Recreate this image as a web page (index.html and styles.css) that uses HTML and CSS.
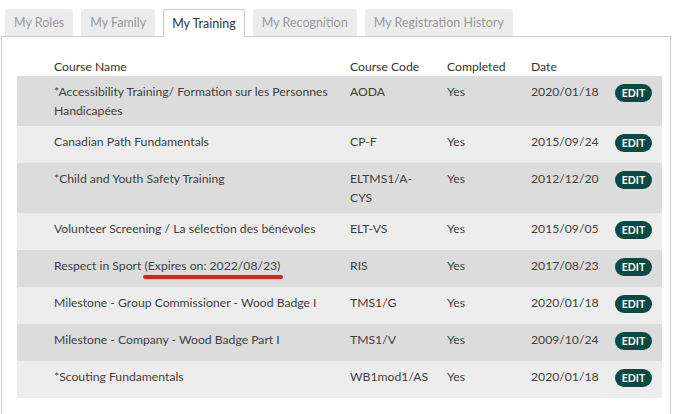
FILE: index.html
```html
<!DOCTYPE html>
<html>
<head>
<meta charset="utf-8">
<link rel="stylesheet" href="styles.css">
</head>
<body>
<div class="page">
  <nav class="tabs">
    <span class="tab">My Roles</span>
    <span class="tab">My Family</span>
    <span class="tab active">My Training</span>
    <span class="tab">My Recognition</span>
    <span class="tab">My Registration History</span>
  </nav>
  <section class="panel">
    <div class="table">
      <div class="row head">
        <div class="c name">Course Name</div>
        <div class="c code">Course Code</div>
        <div class="c done">Completed</div>
        <div class="c date">Date</div>
        <div class="c act"></div>
      </div>
      <div class="row dark">
        <div class="c name">*Accessibility Training/ Formation sur les Personnes Handicapées</div>
        <div class="c code">AODA</div>
        <div class="c done">Yes</div>
        <div class="c date">2020/01/18</div>
        <div class="c act"><span class="edit">EDIT</span></div>
      </div>
      <div class="row light">
        <div class="c name">Canadian Path Fundamentals</div>
        <div class="c code">CP-F</div>
        <div class="c done">Yes</div>
        <div class="c date">2015/09/24</div>
        <div class="c act"><span class="edit">EDIT</span></div>
      </div>
      <div class="row dark">
        <div class="c name">*Child and Youth Safety Training</div>
        <div class="c code">ELTMS1/A-CYS</div>
        <div class="c done">Yes</div>
        <div class="c date">2012/12/20</div>
        <div class="c act"><span class="edit">EDIT</span></div>
      </div>
      <div class="row light">
        <div class="c name">Volunteer Screening / La sélection des bénévoles</div>
        <div class="c code">ELT-VS</div>
        <div class="c done">Yes</div>
        <div class="c date">2015/09/05</div>
        <div class="c act"><span class="edit">EDIT</span></div>
      </div>
      <div class="row dark">
        <div class="c name">Respect in Sport <span class="expires">(Expires on: 2022/08/23)</span></div>
        <div class="c code">RIS</div>
        <div class="c done">Yes</div>
        <div class="c date">2017/08/23</div>
        <div class="c act"><span class="edit">EDIT</span></div>
      </div>
      <div class="row light">
        <div class="c name">Milestone - Group Commissioner - Wood Badge I</div>
        <div class="c code">TMS1/G</div>
        <div class="c done">Yes</div>
        <div class="c date">2020/01/18</div>
        <div class="c act"><span class="edit">EDIT</span></div>
      </div>
      <div class="row dark">
        <div class="c name">Milestone - Company - Wood Badge Part I</div>
        <div class="c code">TMS1/V</div>
        <div class="c done">Yes</div>
        <div class="c date">2009/10/24</div>
        <div class="c act"><span class="edit">EDIT</span></div>
      </div>
      <div class="row light">
        <div class="c name">*Scouting Fundamentals</div>
        <div class="c code">WB1mod1/AS</div>
        <div class="c done">Yes</div>
        <div class="c date">2020/01/18</div>
        <div class="c act"><span class="edit">EDIT</span></div>
      </div>
    </div>
  </section>
</div>
</body>
</html>
```
FILE: styles.css
```css
html, body {
  margin: 0;
  padding: 0;
  background: #fff;
}
body {
  font-family: Lato, "Open Sans", sans-serif;
  font-size: 12.2px;
  color: #3f3f3f;
}
.page {
  width: 670px;
  margin-left: 1px;
}
.tabs {
  display: flex;
  gap: 8px;
  padding: 9px 0 0 4px;
  border-bottom: 1px solid #ccc;
  height: 27px;
}
.tab {
  display: flex;
  align-items: center;
  padding: 0 9px;
  height: 27px;
  background: #ececec;
  color: #9a9a9a;
  border-radius: 3px 3px 0 0;
  font-size: 12.5px;
}
.tab.active {
  background: #fff;
  color: #333;
  border: 1px solid #ccc;
  border-bottom: none;
  height: 27px;
  margin-top: -1px;
  padding: 0 8px;
  position: relative;
  top: 1px;
}
.panel {
  border-left: 1px solid #ccc;
  border-right: 1px solid #ccc;
  padding: 20px 8px 17px 15px;
}
.table {
  width: 645px;
}
.row {
  display: grid;
  grid-template-columns: 333px 97px 84px 84px 47px;
}
.row.head .c {
  padding-top: 0;
  padding-bottom: 0;
  color: #333;
}
.row.dark { background: #dcdcdc; }
.row.light { background: #ededed; }
.c {
  padding: 6px 0;
  line-height: 19px;
}
.c.name { padding-left: 37px; padding-right: 12px; }
.c.code { padding-right: 20px; }
.row .c.act {
  padding: 8px 0 11px;
}
.row.head .c.act {
  padding: 0;
}
.edit {
  display: block;
  width: 37px;
  text-align: center;
  background: #0b4a42;
  color: #fff;
  font-size: 10.5px;
  font-weight: bold;
  line-height: 18px;
  height: 18px;
  border-radius: 9px;
}
.expires {
  position: relative;
}
.expires::after {
  content: "";
  position: absolute;
  left: -2px;
  right: -3px;
  bottom: -6px;
  height: 4px;
  border-radius: 2px;
  background: #e31c1c;
}
```
